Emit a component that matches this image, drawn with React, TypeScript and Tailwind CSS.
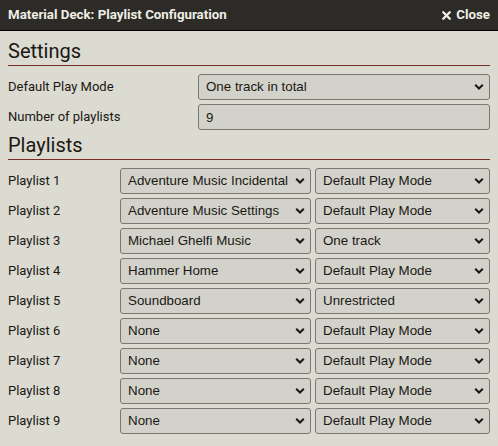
import React from 'react';
import { X } from 'lucide-react';

const playModes = ['Default Play Mode', 'Unrestricted', 'One track', 'One track in total'];

const playlists = [
    { label: 'Playlist 1', name: 'Adventure Music Incidental', mode: 'Default Play Mode' },
    { label: 'Playlist 2', name: 'Adventure Music Settings', mode: 'Default Play Mode' },
    { label: 'Playlist 3', name: 'Michael Ghelfi Music', mode: 'One track' },
    { label: 'Playlist 4', name: 'Hammer Home', mode: 'Default Play Mode' },
    { label: 'Playlist 5', name: 'Soundboard', mode: 'Unrestricted' },
    { label: 'Playlist 6', name: 'None', mode: 'Default Play Mode' },
    { label: 'Playlist 7', name: 'None', mode: 'Default Play Mode' },
    { label: 'Playlist 8', name: 'None', mode: 'Default Play Mode' },
    { label: 'Playlist 9', name: 'None', mode: 'Default Play Mode' },
];

const Chevron = () => (
    <svg width="10" height="7" viewBox="0 0 10 7" className="pointer-events-none absolute right-[6px] top-1/2 -translate-y-1/2">
        <path d="M1.2 1.2 L5 5 L8.8 1.2" fill="none" stroke="#191813" strokeWidth="2" />
    </svg>
);

// fake select: looks like Foundry's select box
const Select = ({ value, options, className }: { value: string; options: string[]; className?: string }) => (
    <div className={`relative h-[26px] min-w-0 ${className ?? ''}`}>
        <select
            defaultValue={value}
            className="h-full w-full appearance-none rounded-[3px] border border-[#7a7971] bg-[#d3d2ca] pl-[7px] pr-[16px] text-[13.33px] text-[#191813] outline-none"
            style={{ fontFamily: '"Liberation Sans", Arial, sans-serif' }}
        >
            {options.map(o => <option key={o}>{o}</option>)}
        </select>
        <Chevron />
    </div>
);

const Heading = ({ children, className }: { children: React.ReactNode; className?: string }) => (
    <h2 className={`h-[29px] border-b border-[#782e22] text-[20px] leading-[28px] text-[#191813] ${className ?? ''}`}>{children}</h2>
);

export default function App() {
    const names = ['None', ...playlists.map(p => p.name).filter(n => n !== 'None')];
    return (
        <div className="flex h-[446px] w-[498px] flex-col bg-[#dcdbd2]" style={{ fontFamily: 'Roboto, "Noto Sans", sans-serif' }}>
            <header className="flex h-[31px] shrink-0 items-center justify-between border-b border-black bg-[#2c2b28] pl-[8px] pr-[8px] text-[#efeee4]">
                <span className="text-[13.3px] font-bold">Material Deck: Playlist Configuration</span>
                <span className="flex items-center gap-[3px] text-[13.3px] font-bold">
                    <X size={13} strokeWidth={4.5} />
                    Close
                </span>
            </header>

            <div className="flex flex-col px-[8px] pt-[6px] text-[#191813]">
                <Heading>Settings</Heading>
                <div className="mt-[8px] flex flex-col gap-[4px] text-[13px]">
                    <div className="grid grid-cols-[190px_1fr] items-center">
                        <span>Default Play Mode</span>
                        <Select value="One track in total" options={playModes} />
                    </div>
                    <div className="grid grid-cols-[190px_1fr] items-center">
                        <span>Number of playlists</span>
                        <input
                            defaultValue="9"
                            className="h-[26px] rounded-[3px] border border-[#7a7971] bg-[#d3d2ca] pl-[7px] text-[13.33px] text-[#191813] outline-none"
                            style={{ fontFamily: '"Liberation Sans", Arial, sans-serif' }}
                        />
                    </div>
                </div>

                <Heading className="mt-[1px]">Playlists</Heading>
                <div className="mt-[8px] flex flex-col gap-[4px] text-[13px]">
                    {playlists.map(p => (
                        <div key={p.label} className="flex items-center">
                            <span className="w-[112px] shrink-0">{p.label}</span>
                            <div className="flex flex-1 gap-[4px]">
                                <Select value={p.name} options={names} className="w-[191px] shrink-0" />
                                <Select value={p.mode} options={playModes} className="flex-1" />
                            </div>
                        </div>
                    ))}
                </div>
            </div>
        </div>
    );
}
